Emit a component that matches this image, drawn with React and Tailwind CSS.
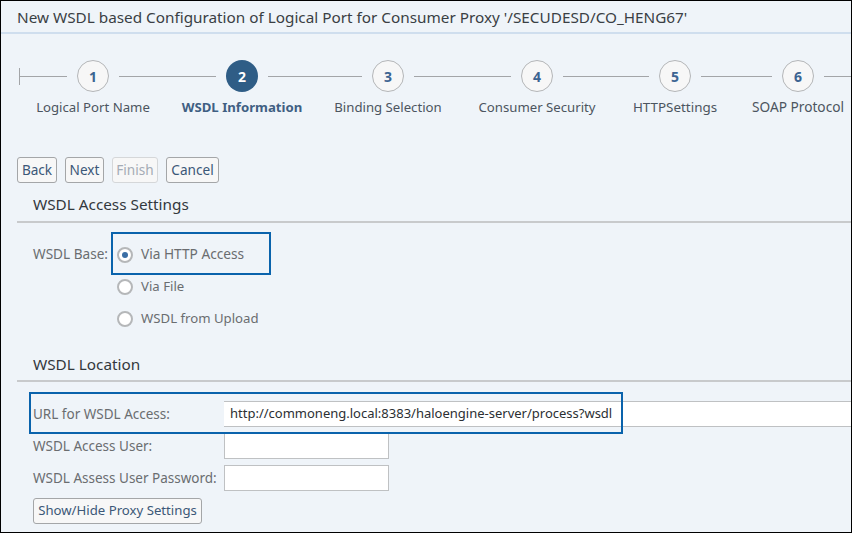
const font = { fontFamily: '"Noto Sans", sans-serif' };

const steps = [
  { n: 1, label: "Logical Port Name", w: "w-[148px]", first: true, size: "text-[13.2px]" },
  { n: 2, label: "WSDL Information", w: "w-[150px]", active: true, size: "text-[13.2px]" },
  { n: 3, label: "Binding Selection", w: "w-[142px]", size: "text-[13.2px]" },
  { n: 4, label: "Consumer Security", w: "w-[156px]", size: "text-[13.2px]" },
  { n: 5, label: "HTTPSettings", w: "w-[120px]", size: "text-[13.4px]" },
  { n: 6, label: "SOAP Protocol", w: "w-[126px]", size: "text-[13.7px]" },
];

function Step({ n, label, w, first, active, size }) {
  return (
    <div className={`${w} shrink-0 flex flex-col items-center`}>
      <div className="flex items-center w-full h-8">
        <div className={`flex-1 h-px bg-[#a3a5a8] relative`}>
          {first && <div className="absolute left-0 -top-[8px] w-px h-[17px] bg-[#a3a5a8]" />}
        </div>
        <div
          className={`mx-[10px] w-8 h-8 rounded-full flex items-center justify-center text-[14px] font-bold ${
            active
              ? "bg-[#2f5d86] text-white"
              : "bg-[#f7f7f7] border border-[#b4b6b8] text-[#3c6491]"
          }`}
        >
          {n}
        </div>
        <div className="flex-1 h-px bg-[#a3a5a8]" />
      </div>
      <div
        className={`mt-[5px] whitespace-nowrap leading-5 ${size} ${
          active ? "font-bold text-[#3f5f83]" : "text-[#4c5560]"
        }`}
      >
        {label}
      </div>
    </div>
  );
}

function Btn({ children, disabled, className = "" }) {
  return (
    <button
      className={`h-[26px] rounded-[3px] border bg-[#f7f7f7] leading-none ${
        disabled ? "border-[#d5d7d9] text-[#a4abb5]" : "border-[#a4a6a8] text-[#3c5878]"
      } ${className}`}
    >
      {children}
    </button>
  );
}

function Radio({ label, checked, size = "text-[13.2px]" }) {
  return (
    <div className="h-8 flex items-center">
      <div className="w-4 h-4 rounded-full border-2 border-[#b5b7b9] bg-white flex items-center justify-center">
        {checked && <div className="w-[6px] h-[6px] rounded-full bg-[#3a6ea5]" />}
      </div>
      <span className={`ml-[8px] ${checked ? "pb-[2px]" : ""} ${size} text-[#6a6d70]`}>{label}</span>
    </div>
  );
}

function Field({ label, wide, value }) {
  return (
    <div className="flex items-center h-[26px]">
      <div className="w-[191px] shrink-0 pt-[1px] text-[13.5px] text-[#6a6d70] whitespace-nowrap">{label}</div>
      <div
        className={`h-[26px] bg-white border-[#bfc1c3] flex items-center ${
          wide ? "flex-1 border-y pl-[6px]" : "w-[165px] border"
        } text-[13px] text-[#2b2f33] whitespace-nowrap`}
      >
        {value}
      </div>
    </div>
  );
}

export default function App() {
  return (
    <div
      className="relative w-[852px] h-[533px] overflow-hidden bg-[#eff4f9] border border-black"
      style={font}
    >
      <div className="h-[33px] pt-[1px] flex items-center pl-[16px] text-[15.3px] text-[#3a3f44] border-b-2 border-[#cfdeee]">
        New WSDL based Configuration of Logical Port for Consumer Proxy '/SECUDESD/CO_HENG67'
      </div>

      <div className="flex pl-[18px] mt-[26px] w-[1000px]">
        {steps.map((s) => (
          <Step key={s.n} {...s} />
        ))}
      </div>

      <div className="flex gap-2 pl-[16px] mt-[40px]">
        <Btn className="w-[40px] text-[13.6px]">Back</Btn>
        <Btn className="w-[39px] text-[13.6px]">Next</Btn>
        <Btn disabled className="w-[46px] text-[13.6px]">Finish</Btn>
        <Btn className="w-[53px] text-[13.6px]">Cancel</Btn>
      </div>

      <div className="ml-[16px] mt-[6px] h-[30px] border-b-2 border-[#c8cacc] pl-[16px] pb-[2px] flex items-center text-[15.3px] text-[#33383d] box-content">
        WSDL Access Settings
      </div>

      <div className="flex pl-[32px] mt-[16px]">
        <div className="w-[84px] h-8 pb-[2px] flex items-center text-[13.6px] text-[#6a6d70] whitespace-nowrap">WSDL Base:</div>
        <div className="flex flex-col">
          <Radio label="Via HTTP Access" checked size="text-[13.7px]" />
          <Radio label="Via File" />
          <Radio label="WSDL from Upload" />
        </div>
      </div>

      <div className="ml-[16px] mt-[14px] h-[30px] border-b-2 border-[#c8cacc] pl-[16px] pb-[1px] flex items-center text-[15.3px] text-[#33383d] box-content">
        WSDL Location
      </div>

      <div className="flex flex-col gap-[6px] pl-[32px] mt-[19px]">
        <Field label="URL for WSDL Access:" wide value="http://commoneng.local:8383/haloengine-server/process?wsdl" />
        <Field label="WSDL Access User:" />
        <Field label="WSDL Assess User Password:" />
        <div>
          <Btn className="w-[169px] text-[13.2px]">Show/Hide Proxy Settings</Btn>
        </div>
      </div>

      <div className="absolute left-[110px] top-[231px] w-[160px] h-[43px] border-2 border-[#0a63ac]" />
      <div className="absolute left-[28px] top-[391px] w-[594px] h-[42px] border-2 border-[#0a63ac]" />
    </div>
  );
}
